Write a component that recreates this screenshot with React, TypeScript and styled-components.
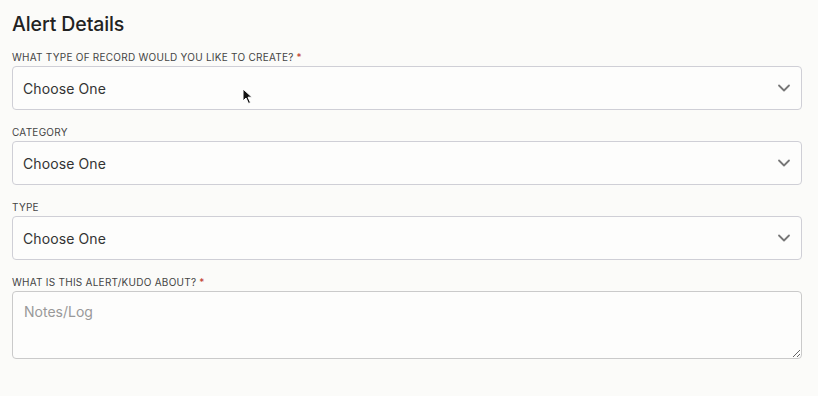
import React from "react";
import styled, { createGlobalStyle } from "styled-components";

const FONT = `"Inter", "Lato", "Liberation Sans", sans-serif`;

const GlobalStyle = createGlobalStyle`
  html, body {
    margin: 0;
    padding: 0;
    background: #fbfbf9;
  }
  body {
    font-family: ${FONT};
  }
`;

const Page = styled.div`
  position: relative;
  width: 818px;
  height: 396px;
  box-sizing: border-box;
  padding: 12px 16px 0 12px;
  background: #fbfbf9;
`;

const Title = styled.h2`
  margin: 0 0 14px;
  font-size: 19.5px;
  line-height: 24px;
  font-weight: 500;
  color: #222;
  letter-spacing: -0.1px;
`;

const Field = styled.div`
  display: flex;
  flex-direction: column;
  gap: 2px;
  margin-bottom: 15px;
`;

const Label = styled.label`
  font-size: 10px;
  line-height: 14px;
  color: #444;
  text-transform: uppercase;
  letter-spacing: 0.25px;

  & span {
    color: #c0392b;
    margin-left: 3px;
  }
`;

const SelectBox = styled.div`
  display: flex;
  align-items: center;
  justify-content: space-between;
  height: 44px;
  box-sizing: border-box;
  padding: 0 10px 0 10px;
  border: 1px solid #cfcfd6;
  border-radius: 4px;
  background: #fdfdfc;
  font-size: 14px;
  letter-spacing: 0.1px;
  color: #333;
`;

const TextArea = styled.textarea`
  height: 68px;
  box-sizing: border-box;
  padding: 11px 11px;
  border: 1px solid #cacaca;
  border-radius: 4px;
  background: #fdfdfc;
  font-family: ${FONT};
  font-size: 14px;
  color: #333;
  resize: vertical;
  outline: none;

  &::placeholder {
    color: #999;
  }
`;

const Cursor = styled.svg`
  position: absolute;
  left: 242px;
  top: 88px;
`;

const Chevron = () => (
  <svg width="14" height="14" viewBox="0 0 14 14" fill="none">
    <path d="M2 4.5 L7 9.5 L12 4.5" stroke="#777" strokeWidth="1.8" strokeLinecap="round" strokeLinejoin="round" />
  </svg>
);

interface SelectFieldProps {
  label: string;
  required?: boolean;
}

const SelectField: React.FC<SelectFieldProps> = (props) => (
  <Field>
    <Label>
      {props.label}
      {props.required ? <span>*</span> : null}
    </Label>
    <SelectBox>
      Choose One
      <Chevron />
    </SelectBox>
  </Field>
);

const App: React.FC = () => {
  return (
    <Page>
      <GlobalStyle />
      <Title>Alert Details</Title>
      <SelectField label="What type of record would you like to create?" required />
      <SelectField label="Category" />
      <SelectField label="Type" />
      <Field>
        <Label>
          What is this Alert/Kudo about?<span>*</span>
        </Label>
        <TextArea placeholder="Notes/Log" />
      </Field>
      <Cursor width="11" height="18" viewBox="0 0 11 18">
        <path d="M1 1 L1 13 L4 10 L6.5 15.5 L8.5 14.6 L6 9.2 L10 9.2 Z" fill="#111" stroke="#fff" strokeWidth="1" />
      </Cursor>
    </Page>
  );
};

export default App;
